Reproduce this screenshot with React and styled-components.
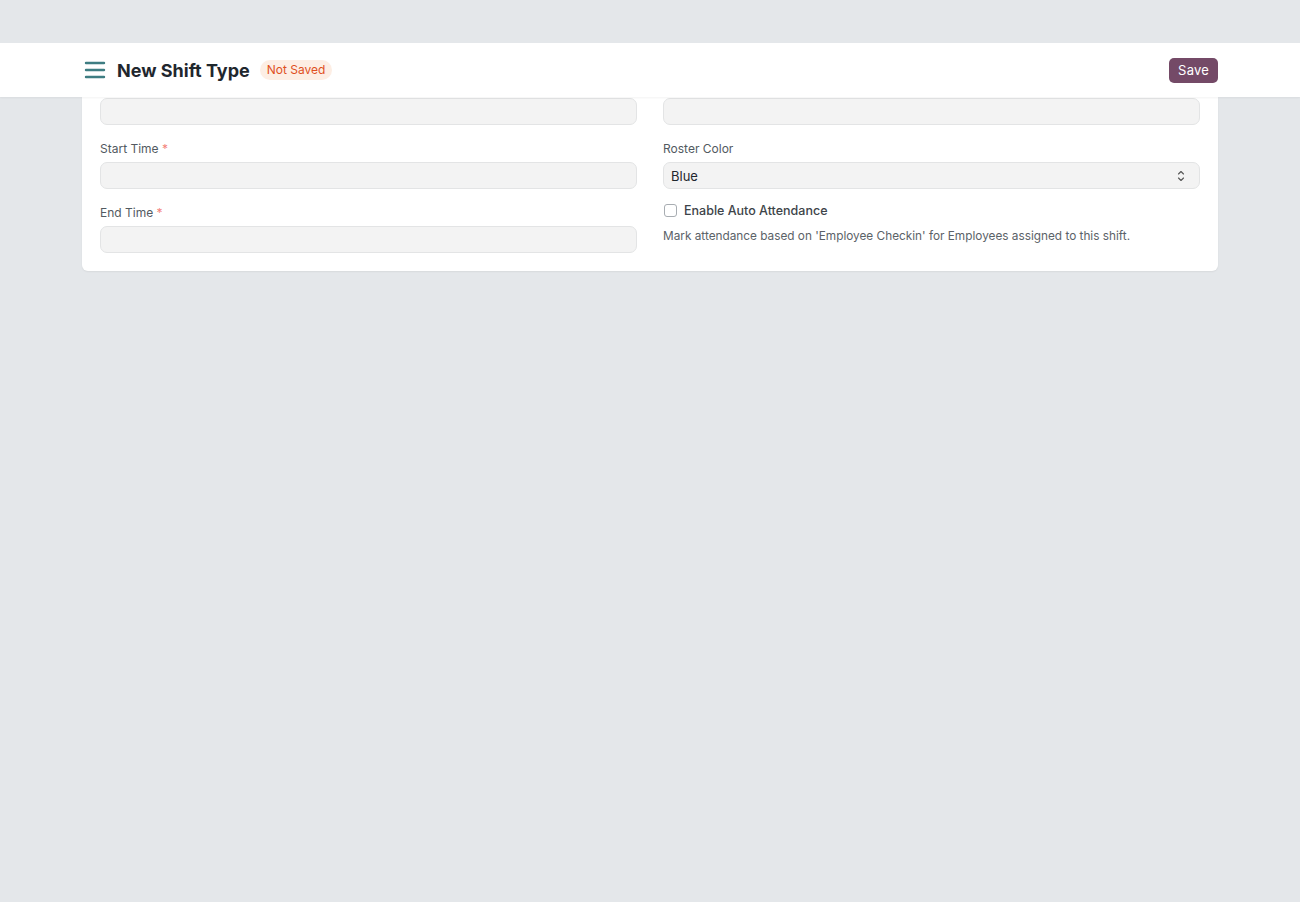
import React from "react";
import styled, { createGlobalStyle } from "styled-components";

const GlobalStyle = createGlobalStyle`
  html, body {
    margin: 0;
    padding: 0;
    background: #e4e7ea;
    font-family: Inter, "Noto Sans", sans-serif;
    color: #1f272e;
  }
  * {
    box-sizing: border-box;
  }
`;

function MenuIcon() {
  return (
    <svg width="22" height="22" viewBox="0 0 22 22" fill="none">
      <path
        d="M2 4h18M2 11h18M2 18h18"
        stroke="#3e7d82"
        strokeWidth="2.4"
        strokeLinecap="round"
      />
    </svg>
  );
}

function SelectArrows() {
  return (
    <svg width="8" height="14" viewBox="0 0 8 14" fill="none">
      <path
        d="M1.5 5L4 2.5L6.5 5M1.5 9L4 11.5L6.5 9"
        stroke="#555"
        strokeWidth="1.1"
        strokeLinecap="round"
        strokeLinejoin="round"
      />
    </svg>
  );
}

function App() {
  return (
    <>
      <GlobalStyle />
      <Page>
        <TopBar />
        <Header>
          <HeaderInner>
            <TitleBox>
              <MenuIcon />
              <h1>New Shift Type</h1>
              <Badge>Not Saved</Badge>
            </TitleBox>
            <SaveButton>Save</SaveButton>
          </HeaderInner>
        </Header>
        <Card>
          <Column>
            <Field>
              <Input />
            </Field>
            <Field>
              <Label>
                Start Time <Req>*</Req>
              </Label>
              <Input />
            </Field>
            <Field>
              <Label>
                End Time <Req>*</Req>
              </Label>
              <Input />
            </Field>
          </Column>
          <Column>
            <Field>
              <Input />
            </Field>
            <Field>
              <Label>Roster Color</Label>
              <Select>
                <span>Blue</span>
                <SelectArrows />
              </Select>
            </Field>
            <CheckRow>
              <CheckBox />
              <span>Enable Auto Attendance</span>
            </CheckRow>
            <Description>
              Mark attendance based on 'Employee Checkin' for Employees assigned
              to this shift.
            </Description>
          </Column>
        </Card>
      </Page>
    </>
  );
}

const Page = styled.div`
  min-height: 902px;
`;

const TopBar = styled.div`
  height: 43px;
  background: #e4e7ea;
`;

const Header = styled.header`
  height: 54px;
  background: #fff;
  box-shadow: 0 1px 2px rgba(0, 0, 0, 0.05);
  position: relative;
  z-index: 1;
`;

const HeaderInner = styled.div`
  width: 1136px;
  height: 100%;
  margin: 0 auto;
  display: flex;
  align-items: center;
  justify-content: space-between;
`;

const TitleBox = styled.div`
  display: flex;
  align-items: center;
  padding-left: 2px;

  svg {
    margin-right: 11px;
  }

  h1 {
    margin: 0 10px 0 0;
    font-size: 18px;
    font-weight: 700;
    color: #1f272e;
  }
`;

const Badge = styled.span`
  padding: 3px 7px;
  border-radius: 10px;
  background: #fdeee4;
  color: #e0501f;
  font-size: 12px;
  line-height: 14px;
`;

const SaveButton = styled.button`
  height: 25px;
  padding: 0 9px;
  border: none;
  border-radius: 5px;
  background: #744a67;
  color: #fff;
  font-family: inherit;
  font-size: 13px;
  letter-spacing: 0.2px;
`;

const Card = styled.div`
  width: 1136px;
  margin: 0 auto;
  background: #fff;
  border-radius: 0 0 6px 6px;
  padding: 1px 18px 18px;
  display: grid;
  grid-template-columns: 1fr 1fr;
  column-gap: 26px;
  box-shadow: 0 1px 2px rgba(0, 0, 0, 0.06);
`;

const Column = styled.div`
  display: flex;
  flex-direction: column;
`;

const Field = styled.div`
  display: flex;
  flex-direction: column;
  margin-bottom: 14px;

  &:last-child {
    margin-bottom: 0;
  }
`;

const Label = styled.label`
  font-size: 12px;
  line-height: 19px;
  color: #525a61;
  margin-bottom: 4px;
`;

const Req = styled.span`
  color: #f3827a;
`;

const Input = styled.div`
  height: 27px;
  border: 1px solid #e3e4e5;
  border-radius: 7px;
  background: #f3f3f3;
`;

const Select = styled(Input)`
  display: flex;
  align-items: center;
  justify-content: space-between;
  padding: 0 14px 0 7px;
  font-size: 13px;
  color: #1f272e;
`;

const CheckRow = styled.div`
  display: flex;
  align-items: center;
  height: 14px;
  font-size: 12.5px;
  font-weight: 500;
  color: #3d4449;
`;

const CheckBox = styled.span`
  width: 13px;
  height: 13px;
  border: 1px solid #a8adb2;
  border-radius: 3px;
  margin: 0 7px 0 1px;
`;

const Description = styled.p`
  margin: 11px 0 0;
  font-size: 11.8px;
  line-height: 16px;
  color: #5b6268;
`;

export default App;
